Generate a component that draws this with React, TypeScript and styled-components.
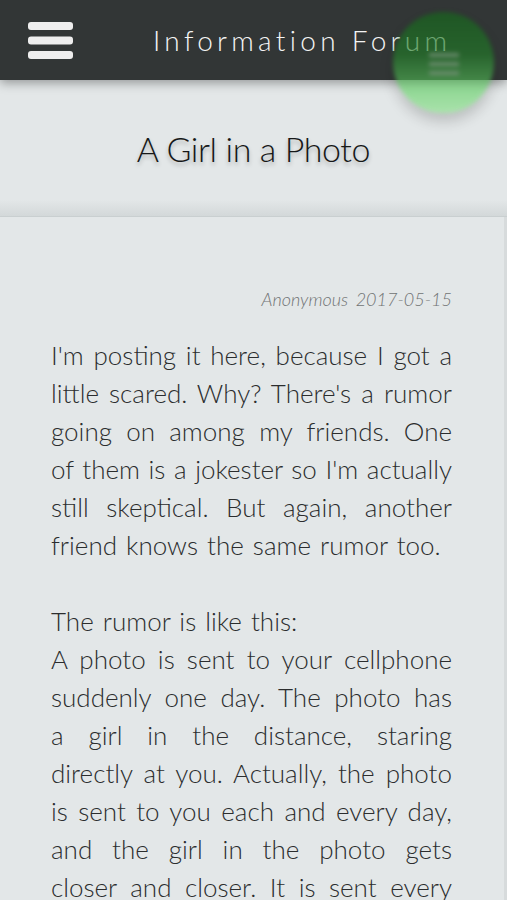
import React from 'react';
import styled, { createGlobalStyle } from 'styled-components';

const GlobalStyle = createGlobalStyle`
  html, body {
    margin: 0;
    padding: 0;
    background: #e3e7e8;
  }
  * {
    box-sizing: border-box;
  }
`;

const Page = styled.div`
  width: 507px;
  height: 900px;
  overflow: hidden;
  background: #e3e7e8;
  font-family: 'Lato', 'Open Sans', sans-serif;
`;

const TopBar = styled.header`
  position: relative;
  z-index: 2;
  height: 80px;
  display: flex;
  align-items: center;
  padding-left: 28px;
  background: #323636;
  box-shadow: 0 3px 10px rgba(0, 0, 0, 0.35);
`;

const MenuButton = styled.button`
  width: 45px;
  height: 40px;
  padding: 0;
  border: none;
  background: none;
  display: flex;
`;

const BarTitle = styled.h1`
  margin: 0 0 0 80px;
  font-weight: 300;
  font-size: 28px;
  letter-spacing: 4.3px;
  color: #f4f4f4;
  white-space: nowrap;
`;

const Fab = styled.div`
  position: absolute;
  left: 393px;
  top: 12px;
  width: 101px;
  height: 101px;
  border-radius: 50%;
  display: flex;
  align-items: center;
  justify-content: center;
  padding-top: 2px;
  background: linear-gradient(180deg, #146a1a 0%, #217f27 42%, #62d065 78%, #86e086 100%);
  opacity: 0.62;
  filter: blur(2px);
  box-shadow: 0 8px 14px rgba(0, 0, 0, 0.3);
`;

const TitleCard = styled.section`
  position: relative;
  z-index: 1;
  height: 137px;
  display: flex;
  align-items: center;
  justify-content: center;
  background: linear-gradient(180deg, #e3e7e8 0%, #e3e7e8 88%, #d3d8d9 100%);
  border-bottom: 1px solid #c9cfd0;
`;

const Heading = styled.h2`
  margin: 0;
  font-weight: 300;
  font-size: 34px;
  letter-spacing: -0.4px;
  color: #161818;
  text-shadow: 0 3px 4px rgba(0, 0, 0, 0.25);
`;

const Article = styled.article`
  padding: 70px 52px 40px 51px;
  border-right: 3px solid #d7dbdc;
`;

const Meta = styled.div`
  text-align: right;
  font-size: 18px;
  line-height: 24px;
  font-style: italic;
  font-weight: 300;
  color: #707374;
  word-spacing: 3px;
  margin-bottom: 25px;
`;

const Body = styled.div`
  margin: 0 0 38px;
  font-size: 26px;
  line-height: 38px;
  font-weight: 300;
  color: #2b2d2e;
`;

const Line = styled.span<{ $last: boolean }>`
  display: block;
  white-space: nowrap;
  text-align: justify;
  text-align-last: ${p => (p.$last ? 'left' : 'justify')};
  word-spacing: ${p => (p.$last ? '2px' : '0')};
`;

const Hamburger = ({ color, thick }: { color: string; thick: number }) => (
  <svg width="45" height="40" viewBox="0 0 45 40">
    {[0, 1, 2].map(i => (
      <rect key={i} x="0" y={2 + i * 14.5} width="45" height={thick} rx="3" fill={color} />
    ))}
  </svg>
);

const paragraphs: string[][][] = [
  [
    [
      "I'm posting it here, because I got a",
      "little scared. Why? There's a rumor",
      'going on among my friends. One',
      "of them is a jokester so I'm actually",
      'still skeptical. But again, another',
      'friend knows the same rumor too.',
    ],
  ],
  [
    ['The rumor is like this:'],
    [
      'A photo is sent to your cellphone',
      'suddenly one day. The photo has',
      'a girl in the distance, staring',
      'directly at you. Actually, the photo',
      'is sent to you each and every day,',
      'and the girl in the photo gets',
      'closer and closer. It is sent every',
      'day until the girl is right in front',
      'of you.',
    ],
  ],
];

const App: React.FC = () => (
  <Page>
    <GlobalStyle />
    <TopBar>
      <MenuButton aria-label="menu">
        <Hamburger color="#eeeeee" thick={8} />
      </MenuButton>
      <BarTitle>Information Forum</BarTitle>
      <Fab>
        <svg width="30" height="26" viewBox="0 0 30 26">
          {[0, 1, 2].map(i => (
            <rect key={i} x="0" y={2 + i * 9} width="30" height="4" rx="1" fill="#9fc8a0" opacity="0.8" />
          ))}
        </svg>
      </Fab>
    </TopBar>
    <TitleCard>
      <Heading>A Girl in a Photo</Heading>
    </TitleCard>
    <Article>
      <Meta>Anonymous 2017-05-15</Meta>
      {paragraphs.map((para, i) => (
        <Body key={i}>
          {para.map(block =>
            block.map((line, j) => (
              <Line key={line} $last={j === block.length - 1}>
                {line}
              </Line>
            )),
          )}
        </Body>
      ))}
    </Article>
  </Page>
);

export default App;
